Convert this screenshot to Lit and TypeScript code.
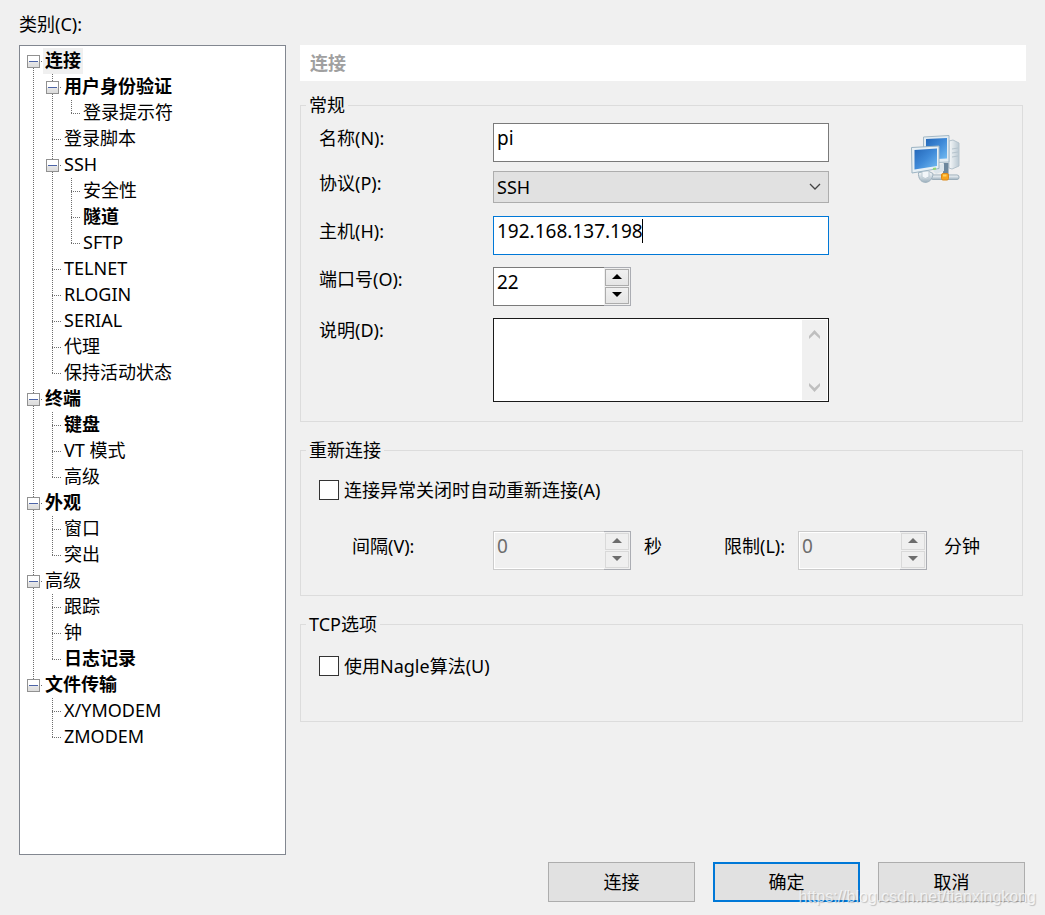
import { LitElement, html, svg, css } from "lit";
import { customElement, property, state } from "lit/decorators.js";
import { classMap } from "lit/directives/class-map.js";

interface TreeItem {
  label: string;
  bold?: boolean;
  selected?: boolean;
  children?: TreeItem[];
}

type Cell = "blank" | "line" | "tee" | "elbow" | "open-first" | "open-mid" | "open-last";

interface Row {
  item: TreeItem;
  cells: Cell[];
}

const CATEGORIES: TreeItem[] = [
  {
    label: "连接",
    bold: true,
    selected: true,
    children: [
      { label: "用户身份验证", bold: true, children: [{ label: "登录提示符" }] },
      { label: "登录脚本" },
      { label: "SSH", children: [{ label: "安全性" }, { label: "隧道", bold: true }, { label: "SFTP" }] },
      { label: "TELNET" },
      { label: "RLOGIN" },
      { label: "SERIAL" },
      { label: "代理" },
      { label: "保持活动状态" },
    ],
  },
  { label: "终端", bold: true, children: [{ label: "键盘", bold: true }, { label: "VT 模式" }, { label: "高级" }] },
  { label: "外观", bold: true, children: [{ label: "窗口" }, { label: "突出" }] },
  { label: "高级", children: [{ label: "跟踪" }, { label: "钟" }, { label: "日志记录", bold: true }] },
  { label: "文件传输", bold: true, children: [{ label: "X/YMODEM" }, { label: "ZMODEM" }] },
];

function flatten(items: TreeItem[], lead: Cell[] = []): Row[] {
  return items.flatMap((item, i) => {
    const last = i === items.length - 1;
    const first = i === 0 && lead.length === 0;
    const own: Cell = item.children
      ? first ? "open-first" : last ? "open-last" : "open-mid"
      : last ? "elbow" : "tee";
    const below: Cell[] = [...lead, last ? "blank" : "line"];
    return [{ item, cells: [...lead, own] }, ...(item.children ? flatten(item.children, below) : [])];
  });
}

@customElement("category-tree")
export class CategoryTree extends LitElement {
  static styles = css`
    :host {
      display: block;
      box-sizing: border-box;
      border: 1px solid #828790;
      background: #fff;
      padding: 2px 4px;
    }
    .list {
      list-style: none;
      margin: 0;
      padding: 0;
    }
    .row {
      display: flex;
      height: 26px;
      line-height: 24px;
      white-space: nowrap;
    }
    .cell {
      flex: none;
      width: 19px;
      height: 26px;
    }
    .dots {
      stroke: #6e6e6e;
      stroke-dasharray: 1 1;
    }
    .box {
      fill: url(#face);
      stroke: #919191;
    }
    .minus {
      stroke: #4b63a7;
    }
    .label {
      padding: 0 2px;
    }
    .bold {
      font-weight: 700;
    }
    .selected {
      background: #f0f0f0;
    }
  `;

  private cell(kind: Cell) {
    const open = kind.startsWith("open");
    const up = kind !== "blank" && kind !== "open-first";
    const down = kind === "line" || kind === "tee" || kind === "open-first" || kind === "open-mid";
    return html`<svg class="cell" viewBox="0 0 19 26" shape-rendering="crispEdges" aria-hidden="true">
      <defs>
        <linearGradient id="face" x1="0" y1="0" x2="0" y2="1">
          <stop offset="0.45" stop-color="#fff" />
          <stop offset="0.6" stop-color="#e4e4e4" />
          <stop offset="1" stop-color="#dcdcdc" />
        </linearGradient>
      </defs>
      ${up ? svg`<line class="dots" x1="9.5" y1="0" x2="9.5" y2="13" />` : ""}
      ${down ? svg`<line class="dots" x1="9.5" y1="14" x2="9.5" y2="26" />` : ""}
      ${kind !== "blank" && kind !== "line"
        ? svg`<line class="dots" x1="9" y1="13.5" x2="19" y2="13.5" />`
        : ""}
      ${open
        ? svg`<rect class="box" x="3.5" y="7.5" width="12" height="12" rx="1" />
            <line class="minus" x1="5" y1="13.5" x2="14" y2="13.5" />`
        : ""}
    </svg>`;
  }

  render() {
    return html`<ul class="list" role="tree" aria-label="类别">
      ${flatten(CATEGORIES).map(
        ({ item, cells }) => html`<li
          class="row"
          role="treeitem"
          aria-level=${cells.length}
          aria-selected=${item.selected ? "true" : "false"}
        >
          ${cells.map((c) => this.cell(c))}<span
            class=${classMap({ label: true, bold: !!item.bold, selected: !!item.selected })}
            >${item.label}</span
          >
        </li>`
      )}
    </ul>`;
  }
}

@customElement("spin-box")
export class SpinBox extends LitElement {
  @property() label = "";
  @property({ type: Number }) value = 0;
  @property({ type: Boolean, reflect: true }) disabled = false;

  static styles = css`
    :host {
      display: flex;
      box-sizing: border-box;
      height: 39px;
    }
    .field {
      flex: 1;
      min-width: 0;
      box-sizing: border-box;
      border: 1px solid #7a7a7a;
      border-right: 0;
      border-radius: 0;
      padding: 0 3px 9px;
      margin: 0;
      background: #fff;
      color: #000;
      font: inherit;
      font-size: 19px;
      outline: 0;
    }
    .field:disabled {
      border-color: #ccc;
      background: #f0f0f0;
      color: #6d6d6d;
      box-shadow: inset 0 1px #fff, inset 1px 0 #fff, inset 0 -1px #fff;
    }
    .buttons {
      flex: none;
      box-sizing: border-box;
      width: 27px;
      display: grid;
      grid-template-rows: 1fr 1fr;
      gap: 1px;
      padding: 1px;
      border: 1px solid #abadb3;
      border-left: 0;
      background: #f0f0f0;
    }
    .step {
      display: flex;
      align-items: center;
      justify-content: center;
      padding: 0 0 3px;
      margin: 0;
      border: 1px solid #acacac;
      background: linear-gradient(#f0f0f0, #e5e5e5);
      color: #000;
    }
    .step:disabled {
      border-color: #d9d9d9;
      background: #efefef;
      color: #6d6d6d;
    }
    .arrow {
      display: block;
      width: 10px;
      height: 5px;
      fill: currentColor;
    }
  `;

  private step(by: number) {
    this.value = Math.max(0, this.value + by);
  }

  render() {
    return html`<input
        class="field"
        type="text"
        inputmode="numeric"
        aria-label=${this.label}
        .value=${String(this.value)}
        ?disabled=${this.disabled}
      />
      <div class="buttons">
        <button class="step" aria-label="增加" ?disabled=${this.disabled} @click=${() => this.step(1)}>
          <svg class="arrow" viewBox="0 0 10 5"><path d="M0 5L5 0l5 5z" /></svg>
        </button>
        <button class="step" aria-label="减少" ?disabled=${this.disabled} @click=${() => this.step(-1)}>
          <svg class="arrow" viewBox="0 0 10 5"><path d="M0 0l5 5 5-5z" /></svg>
        </button>
      </div>`;
  }
}

@customElement("app-root")
export class AppRoot extends LitElement {
  @state() private host = "192.168.137.198";

  static styles = css`
    :host {
      display: block;
      font: 18px/24px "Noto Sans", "Noto Sans CJK SC", sans-serif;
      color: #000;
    }
    .dialog {
      position: relative;
      box-sizing: border-box;
      min-height: 100vh;
      display: flex;
      flex-direction: column;
      padding: 12px 19px 13px;
      background: #f0f0f0;
    }
    .caption {
      margin-bottom: 9px;
    }
    .body {
      flex: 1;
      display: grid;
      grid-template-columns: 267px 1fr;
      gap: 14px;
    }
    .heading {
      margin: 0 0 12px;
      padding: 0 10px;
      background: #fff;
      color: #a0a0a0;
      font-size: 18px;
      line-height: 36px;
      font-weight: 700;
    }
    .group {
      min-width: 0;
      margin: 0 3px 16px 0;
      border: 1px solid #dcdcdc;
      padding: 6px 0 19px 18px;
    }
    .legend {
      margin-left: -13px;
      padding: 0 3px;
    }
    .general {
      display: flex;
    }
    .form {
      flex: 1;
      display: grid;
      gap: 12px;
    }
    .line {
      display: grid;
      grid-template-columns: 174px 1fr;
      align-items: start;
    }
    .tall .name {
      line-height: 30px;
    }
    .tight {
      margin: -3px 0 1px;
    }
    .text {
      display: block;
      box-sizing: border-box;
      width: 100%;
      height: 39px;
      margin: 0;
      padding: 0 3px 9px;
      border: 1px solid #7a7a7a;
      border-radius: 0;
      background: #fff;
      color: #000;
      font: inherit;
      font-size: 19px;
      outline: 0;
    }
    .over {
      position: relative;
    }
    .active {
      border-color: #0078d7;
    }
    .caret {
      position: absolute;
      left: 149px;
      top: 3px;
      width: 1px;
      height: 24px;
      background: #000;
    }
    .select {
      display: block;
      appearance: none;
      box-sizing: border-box;
      width: 100%;
      height: 32px;
      margin: 0;
      padding: 0 30px 0 3px;
      border: 1px solid #adadad;
      border-radius: 0;
      background: #e1e1e1;
      color: #000;
      font: inherit;
    }
    .chevron {
      position: absolute;
      right: 8px;
      top: 12px;
      width: 12px;
      height: 8px;
      fill: none;
      stroke: #444;
      pointer-events: none;
    }
    .port {
      width: 138px;
    }
    .memo {
      display: flex;
      box-sizing: border-box;
      height: 84px;
      border: 1px solid #1a1a1a;
      background: #fff;
      padding: 1px;
    }
    .area {
      flex: 1;
      min-width: 0;
      margin: 0;
      padding: 2px 3px;
      border: 0;
      background: transparent;
      font: inherit;
      resize: none;
      outline: 0;
      overflow: hidden;
    }
    .bar {
      display: flex;
      flex-direction: column;
      justify-content: space-between;
      align-items: center;
      width: 25px;
      box-sizing: border-box;
      padding: 10px 0 8px;
      background: #f0f0f0;
    }
    .bar-arrow {
      width: 11px;
      height: 9px;
      fill: #bfbfbf;
    }
    .picture {
      flex: none;
      box-sizing: border-box;
      width: 193px;
      padding: 12px 0 0 81px;
    }
    .computers {
      display: block;
      width: 50px;
      height: 50px;
    }
    .check {
      display: flex;
      align-items: center;
      gap: 5px;
    }
    .tick {
      appearance: none;
      flex: none;
      box-sizing: border-box;
      width: 20px;
      height: 20px;
      margin: 0;
      border: 1px solid #333;
      background: #fff;
    }
    .reconnect {
      padding-top: 16px;
      padding-bottom: 25px;
    }
    .tcp {
      padding-top: 18px;
      padding-bottom: 43px;
      margin-bottom: 0;
    }
    .limits {
      display: grid;
      grid-template-columns: 141px 138px 93px 74px 129px auto;
      margin-top: 29px;
      padding-left: 33px;
      line-height: 30px;
    }
    .unit {
      padding-left: 13px;
    }
    .unit-wide {
      padding-left: 17px;
    }
    .actions {
      display: flex;
      justify-content: flex-end;
      gap: 18px;
      padding: 7px 1px 0 0;
    }
    .button {
      box-sizing: border-box;
      width: 147px;
      height: 40px;
      margin: 0;
      padding: 0;
      border: 1px solid #adadad;
      background: #e1e1e1;
      color: #000;
      font: inherit;
    }
    .default {
      border: 2px solid #0078d7;
    }
    .watermark {
      position: absolute;
      right: 9px;
      bottom: 7px;
      font: 16px/22px "Liberation Sans", sans-serif;
      color: rgba(255, 255, 255, 0.7);
      text-shadow: 1px 1px 1px rgba(0, 0, 0, 0.2);
      pointer-events: none;
    }
  `;

  private computers() {
    return html`<svg class="computers" viewBox="0 0 50 50" aria-hidden="true">
      <defs>
        <linearGradient id="screen" x1="0" y1="0" x2="1" y2="1">
          <stop offset="0" stop-color="#2467b8" />
          <stop offset="0.5" stop-color="#3f8ad8" />
          <stop offset="1" stop-color="#74bcf2" />
        </linearGradient>
        <linearGradient id="metal" x1="0" y1="0" x2="0" y2="1">
          <stop offset="0" stop-color="#fbfdfe" />
          <stop offset="1" stop-color="#9fb2bf" />
        </linearGradient>
        <linearGradient id="tower" x1="0" y1="0" x2="1" y2="0">
          <stop offset="0" stop-color="#f7f9fa" />
          <stop offset="1" stop-color="#b9c8d2" />
        </linearGradient>
      </defs>
      <path d="M39 6l4-1 6 3v23l-7 3-3-1z" fill="url(#tower)" stroke="#b4c2cc" />
      <path d="M42 14l6-1M42 18l6-1M42 22l6-1" stroke="#b5c3cd" fill="none" />
      <path d="M13.500 2L39 .5V27l-25.500 1z" fill="#e3ecf2" stroke="#a3b8c6" />
      <path d="M16 4l21-1v20.500l-21 1z" fill="url(#screen)" />
      <path d="M33 28h5.500v12H33z" fill="#6c879d" />
      <path d="M29 30l5-2v8l-8 3-3-3z" fill="#dce5eb" />
      <rect x="21" y="40" width="28" height="4.500" rx="2" fill="url(#metal)" stroke="#9badb9" />
      <path d="M8.500 37.500c-1 13 14 13 14.500 1l-4-2z" fill="url(#metal)" stroke="#9fb2bf" />
      <path d="M12 36h7v6q-4 3-7 0z" fill="#f2f6f9" stroke="#bccad3" />
      <path d="M1.500 12.500L29 11v22.500L2 38z" fill="#e8f0f5" stroke="#9db4c3" />
      <path d="M4.500 15L27 13.500V31L4.500 34.500z" fill="url(#screen)" />
      <path d="M23 34l3-.5" stroke="#8fd873" stroke-width="2" />
      <rect x="31.500" y="38.500" width="7" height="6.500" rx="1.500" fill="#f8a31c" stroke="#dc8a1c" />
      <path d="M33 40.500h3.500" stroke="#ffd060" stroke-width="2" />
    </svg>`;
  }

  render() {
    return html`<div class="dialog">
      <div class="caption">类别(C):</div>
      <div class="body">
        <category-tree></category-tree>
        <main>
          <h1 class="heading">连接</h1>
          <fieldset class="group">
            <legend class="legend">常规</legend>
            <div class="general">
              <div class="form">
                <div class="line tall">
                  <label class="name" for="name">名称(N):</label>
                  <input class="text" id="name" type="text" .value=${"pi"} />
                </div>
                <div class="line tight">
                  <label class="name" for="protocol">协议(P):</label>
                  <div class="over">
                    <select class="select" id="protocol">
                      <option>SSH</option>
                    </select>
                    <svg class="chevron" viewBox="0 0 12 8"><path d="M1 1l5 5 5-5" stroke-width="1.300" /></svg>
                  </div>
                </div>
                <div class="line tall">
                  <label class="name" for="host">主机(H):</label>
                  <div class="over">
                    <input
                      class="text active"
                      id="host"
                      type="text"
                      .value=${this.host}
                      @input=${(e: Event) => (this.host = (e.target as HTMLInputElement).value)}
                    />
                    <span class="caret"></span>
                  </div>
                </div>
                <div class="line">
                  <label class="name" for="port">端口号(O):</label>
                  <spin-box class="port" id="port" label="端口号" value="22"></spin-box>
                </div>
                <div class="line">
                  <label class="name" for="note">说明(D):</label>
                  <div class="memo">
                    <textarea class="area" id="note"></textarea>
                    <div class="bar">
                      <svg class="bar-arrow" viewBox="0 0 11 9"><path d="M0 6l5.500-6L11 6v3L5.500 4 0 9z" /></svg>
                      <svg class="bar-arrow" viewBox="0 0 11 9"><path d="M0 3l5.500 6L11 3V0L5.500 5 0 0z" /></svg>
                    </div>
                  </div>
                </div>
              </div>
              <div class="picture">${this.computers()}</div>
            </div>
          </fieldset>
          <fieldset class="group reconnect">
            <legend class="legend">重新连接</legend>
            <label class="check"><input class="tick" type="checkbox" />连接异常关闭时自动重新连接(A)</label>
            <div class="limits">
              <label for="interval">间隔(V):</label>
              <spin-box id="interval" label="间隔" value="0" disabled></spin-box>
              <span class="unit">秒</span>
              <label for="limit">限制(L):</label>
              <spin-box id="limit" label="限制" value="0" disabled></spin-box>
              <span class="unit-wide">分钟</span>
            </div>
          </fieldset>
          <fieldset class="group tcp">
            <legend class="legend">TCP选项</legend>
            <label class="check"><input class="tick" type="checkbox" />使用Nagle算法(U)</label>
          </fieldset>
        </main>
      </div>
      <div class="actions">
        <button class="button">连接</button>
        <button class="button default">确定</button>
        <button class="button">取消</button>
      </div>
      <div class="watermark">https://blog.csdn.net/tianxingkong</div>
    </div>`;
  }
}
